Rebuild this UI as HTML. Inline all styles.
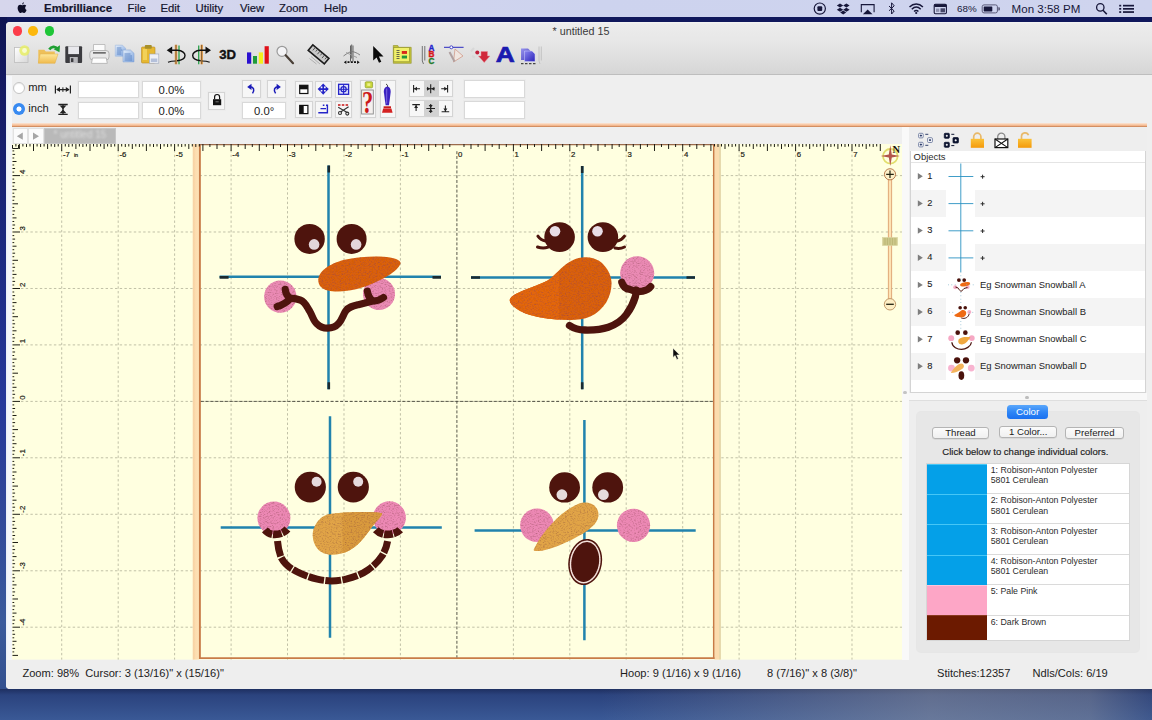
<!DOCTYPE html>
<html><head><meta charset="utf-8"><title>Embrilliance</title>
<style>
*{box-sizing:border-box;margin:0;padding:0}
html,body{width:1152px;height:720px;overflow:hidden}
body{font-family:"Liberation Sans",sans-serif;position:relative;background:#2c4480;color:#111}
.abs{position:absolute}
#desk{position:absolute;left:0;top:0;width:1152px;height:720px;background:#10185c}
#deskb{position:absolute;left:0;top:680px;width:1152px;height:40px;
 background:
 linear-gradient(to right,rgba(0,0,0,0) 0px,rgba(0,0,0,0) 600px,rgba(150,152,160,.5) 930px,rgba(140,142,152,.46) 1090px,rgba(80,90,120,.25) 1152px),
 linear-gradient(to bottom,#1a2a5a 0px,#1c2c5c 8px,#2b437e 15px,#3a5996 40px);}
#leftstrip{position:absolute;left:0;top:17px;width:7px;height:672px;background:linear-gradient(to bottom,#0e1452 0,#161c66 85px,#1c2a82 240px,#26389a 385px,#30489a 500px,#3a5a9c 605px,#33508e 672px)}
#menubar{position:absolute;left:0;top:0;width:1152px;height:17px;background:linear-gradient(to right,#d6d6ec 0,#d2d5ee 300px,#cdd3ee 600px,#cfd4ee 1152px);font-size:11.3px;color:#15152e}
#menubar span{position:absolute;top:2.250px;white-space:pre;-webkit-text-stroke:.2px #15152e}
#win{position:absolute;left:6px;top:22px;width:1150px;height:666.5px;background:#efefef;border-radius:4px 0 0 4px;overflow:hidden}
#tb{position:absolute;left:0;top:0;width:1150px;height:53px;background:linear-gradient(to bottom,#f4f4f4 0,#ececec 2px,#e7e7e7 20px,#d6d6d6 52px);border-bottom:1px solid #bebebe}
.tl{position:absolute;top:4px;width:9.5px;height:9.5px;border-radius:50%}
#title{position:absolute;top:3.200px;left:0;width:1150px;text-align:center;font-size:10.750px;color:#3a3a3a}
.fld{position:absolute;background:#fff;border:1px solid #d9d9d9;box-shadow:0 0 0 1px #ebebeb;font-size:11.3px;text-align:center;color:#222}
.lbl{position:absolute;font-size:11.6px;color:#1a1a1a;white-space:pre}
</style></head><body>
<div id="desk"></div><div id="deskb"></div><div id="leftstrip"></div>
<div id="menubar">
<svg class="abs" style="left:16.900px;top:2px" width="10.400" height="13.400" viewBox="0 0 10 12" preserveAspectRatio="none"><path d="M6.6 0.2c.1.9-.7 1.9-1.6 2 -.1-.9.7-1.9 1.6-2zM5 2.9c.5 0 1.100-.55 2.000-.5.800.05 1.500.4 1.900 1.000-1.600 1.000-1.300 3.200.300 3.800-.4 1.100-1.300 2.700-2.300 2.700-.7 0-.9-.45-1.800-.45s-1.200.45-1.800.45C2.200 9.900.6 7.300.6 5.400c0-1.800 1.200-2.900 2.400-2.900.8 0 1.500.4 2.000.4z" fill="#0e0e28"/></svg>
<span style="left:44px;font-weight:700;font-size:11.45px">Embrilliance</span>
<span style="left:127.5px">File</span>
<span style="left:160.5px">Edit</span>
<span style="left:195.5px">Utility</span>
<span style="left:240px">View</span>
<span style="left:279px">Zoom</span>
<span style="left:324px">Help</span>
</div>
<svg class="abs" style="left:800px;top:0" width="352" height="17" viewBox="800 0 352 17">
<g fill="none" stroke="#17173a" stroke-width="1.200">
<circle cx="819.800" cy="8.600" r="5.600"/>
<path d="M861.300 12.200v-7.600h12.800v7.600" stroke-width="1.100"/>
<path d="M889 6l5.200 5-2.600 3v-11.200l2.600 3-5.200 5" stroke-width="1"/>
<path d="M909.500 7c4-4 9.500-4 13.400 0M911.800 9.300c2.700-2.700 6.200-2.700 8.900 0M914.100 11.500c1.300-1.300 3-1.300 4.300 0" stroke-width="1.500"/>
<rect x="934.200" y="4.300" width="12.200" height="9.400" rx="1.200" stroke-width="1.100"/>
<rect x="982.200" y="4.900" width="15.200" height="8" rx="1.800" stroke="#5a5a78" stroke-width="1"/>
<circle cx="1100.300" cy="7.400" r="3.700" stroke-width="1.300"/><path d="M1103 10.300l3.800 4" stroke-width="1.600"/>
</g>
<g fill="#17173a">
<rect x="817.400" y="6.200" width="4.800" height="4.800" rx="1"/>
<path d="M840 3.500l3.200 2-3.200 2-3.200-2zM846.400 3.500l3.200 2-3.200 2-3.200-2zM840 7.700l3.200 2-3.200 2-3.200-2zM846.400 7.700l3.200 2-3.200 2-3.200-2zM843.200 10.600l3 2-3 2-3-2z"/>
<path d="M867.700 9.400l4.800 4.800h-9.600z"/>
<circle cx="916.200" cy="13" r="1.100"/>
<rect x="934.200" y="4.300" width="12.200" height="2.600" rx="1"/>
<rect x="940.500" y="8.300" width="4.500" height="4" opacity=".75"/><rect x="936" y="8.600" width="3.300" height="3.300" opacity=".35"/>
<rect x="983.700" y="6.400" width="8.600" height="5" rx=".6"/>
<path d="M998.300 7.300h.8a.8.800 0 0 1 .8.800v1.600a.8.800 0 0 1-.8.800h-.8z" fill="#5a5a78"/>
<rect x="1119.200" y="4.800" width="2" height="1.700"/><rect x="1123" y="4.800" width="11" height="1.700"/>
<rect x="1119.200" y="8" width="2" height="1.700"/><rect x="1123" y="8" width="11" height="1.700"/>
<rect x="1119.200" y="11.200" width="2" height="1.700"/><rect x="1123" y="11.200" width="11" height="1.700"/>
</g>
<text x="957" y="12.300" font-family="Liberation Sans" font-size="9.800" fill="#17173a">68%</text>
<text x="1011.600" y="12.600" font-family="Liberation Sans" font-size="11.550" fill="#17173a">Mon 3:58 PM</text>
</svg>
<div id="win">
<div class="abs" style="left:0;top:54px;width:6px;height:584px;background:linear-gradient(to right,#e8eef8 0,#f4f7fb 2px,#f6f7f9 6px)"></div>
<div id="tb">
 <div class="tl" style="left:6.5px;background:#fc3d4a"></div>
 <div class="tl" style="left:22.3px;background:#fcb80e"></div>
 <div class="tl" style="left:38.7px;background:#1fc638"></div>
 <div id="title">* untitled 15</div>
</div>
<svg class="abs" style="left:0;top:18px" width="560" height="34" viewBox="6 40 560 34">
<defs>
<linearGradient id="gFold" x1="0" y1="0" x2="0" y2="1"><stop offset="0" stop-color="#fde79a"/><stop offset="1" stop-color="#f0ba4c"/></linearGradient>
<linearGradient id="gDoc" x1="0" y1="0" x2="1" y2="1"><stop offset="0" stop-color="#ffffff"/><stop offset="1" stop-color="#d8d8d8"/></linearGradient>
<linearGradient id="gBlue" x1="0" y1="0" x2="1" y2="1"><stop offset="0" stop-color="#e4eefa"/><stop offset="1" stop-color="#7fa6e0"/></linearGradient>
<linearGradient id="gPur" x1="0" y1="0" x2="1" y2="1"><stop offset="0" stop-color="#8a86f0"/><stop offset="1" stop-color="#2a22b8"/></linearGradient>
</defs>
<!-- new -->
<rect x="14.500" y="47.500" width="13.500" height="15" fill="url(#gDoc)" stroke="#bdbdbd" stroke-width=".8"/>
<circle cx="24.500" cy="50.500" r="5.200" fill="#e8ee66" opacity=".85"/>
<circle cx="24.500" cy="50.500" r="2.400" fill="#f8fbd0"/>
<!-- open -->
<path d="M38.300 49.800h6l1.500 1.800h9v11.500h-16.500z" fill="#eec05a"/>
<path d="M40.200 54h17.800l-3 9.300h-16.700z" fill="url(#gFold)" stroke="#e0b048" stroke-width=".5"/>
<path d="M49.300 49.600c2.200-3.400 6-3.600 8-.8" fill="none" stroke="#1fa032" stroke-width="2.700"/>
<path d="M60 45.200l-.5 7-5.800-3z" fill="#1fa032"/>
<!-- save -->
<rect x="65.300" y="46.300" width="16.800" height="16.800" rx="1" fill="#3c3c40"/>
<rect x="68.200" y="46.300" width="10.800" height="7.800" fill="#e8e8ec"/>
<rect x="69.800" y="57" width="8" height="6.100" fill="#b8b8bc"/>
<rect x="71" y="58.200" width="2.400" height="3.800" fill="#3c3c40"/>
<!-- print -->
<path d="M93.500 52.500v-8h11.500v8" fill="#fbfbfb" stroke="#b4b4b4" stroke-width=".8"/>
<rect x="89.800" y="50.500" width="19.200" height="9.500" rx="3" fill="#e8e8e8" stroke="#a8a8a8" stroke-width=".8"/>
<rect x="93" y="52" width="12.800" height="1.700" fill="#6e6e6e"/>
<path d="M92.500 58h13.800l1 5.400h-15.800z" fill="#fdfdfd" stroke="#acacac" stroke-width=".8"/>
<!-- copy -->
<path d="M115.300 45.200h7.200l3 3v8h-10.200z" fill="url(#gBlue)" stroke="#9fb8df" stroke-width=".6"/>
<path d="M123 50h7.400l3.600 3.300v8.600h-11z" fill="url(#gBlue)" stroke="#86a4d4" stroke-width=".6"/>
<path d="M116.800 48h4.600M116.800 50h5.500M116.800 52h4.500M116.800 54h4.500M124.500 54h6M124.500 56h7.500M124.500 58h7.500M124.500 60h7.500" stroke="#4f78bc" stroke-width=".8"/>
<!-- paste -->
<rect x="141.500" y="47" width="13.500" height="16" rx="1" fill="#e6b832" stroke="#b98a22" stroke-width=".6"/><rect x="143" y="49" width="4" height="11" fill="#f6dc6a" opacity=".7"/>
<rect x="144.800" y="45" width="7" height="3.800" rx="1" fill="#a8902a"/>
<rect x="149.300" y="54" width="9.500" height="9.200" fill="#eef0f6" stroke="#9aa4ba" stroke-width=".6"/>
<rect x="150.800" y="58.500" width="6.500" height="3.500" fill="#b4c0da"/>
<!-- flip 1 -->
<g>
<path d="M176 44.800v19.400" stroke="#f4b060" stroke-width="2.600"/><path d="M176 44.800v19.400" stroke="#2a1a08" stroke-width=".6"/>
<path d="M179 45.500v18.800" stroke="#2aa04a" stroke-width="1.300"/>
<path d="M170 50.200h7.500c5 .3 7.500 3 7.500 5.300 0 2.600-3 4.700-8 5.200" fill="none" stroke="#111" stroke-width="1.400"/>
<path d="M166.700 50.200l5.500-3.800v7.600z" fill="#111"/>
<path d="M168 62.300c2.500-1 5-1.300 7.500-1.300" fill="none" stroke="#111" stroke-width="1.200"/>
</g>
<!-- flip 2 -->
<g>
<path d="M201.700 44.800v19.400" stroke="#f4b060" stroke-width="2.600"/><path d="M201.700 44.800v19.400" stroke="#2a1a08" stroke-width=".6"/>
<path d="M198.700 45.500v18.800" stroke="#2aa04a" stroke-width="1.300"/>
<path d="M207.700 50.200h-7.500c-5 .3-7.500 3-7.500 5.300 0 2.600 3 4.700 8 5.200" fill="none" stroke="#111" stroke-width="1.400"/>
<path d="M211 50.200l-5.500-3.800v7.600z" fill="#111"/>
<path d="M209.700 62.300c-2.500-1-5-1.300-7.500-1.300" fill="none" stroke="#111" stroke-width="1.200"/>
</g>
<!-- 3D -->
<text x="219.300" y="58.700" font-family="Liberation Sans" font-weight="700" font-size="13.400" fill="#111" textLength="16.800" lengthAdjust="spacingAndGlyphs" stroke="#111" stroke-width=".4">3D</text>
<!-- bars -->
<rect x="247" y="52.400" width="4.200" height="11.300" fill="#2a10d0"/>
<rect x="253" y="56" width="4" height="7.700" fill="#1e9a3a"/>
<rect x="258.800" y="52.400" width="4.200" height="11.300" fill="#f4ee1e"/>
<rect x="264.600" y="46.200" width="4.200" height="17.500" fill="#e01018"/>
<!-- magnifier -->
<circle cx="282" cy="51.300" r="5" fill="#f4f4f6" stroke="#9a9a9a" stroke-width="1.200"/>
<path d="M285.700 55.200l7.300 8" stroke="#4a4038" stroke-width="2.200" stroke-linecap="round"/>
<!-- ruler icon -->
<g transform="rotate(40 318.500 54.500)">
<rect x="308" y="50.800" width="21" height="7.200" fill="#c8c8c8" stroke="#1c1c1c" stroke-width="1.600"/>
<path d="M311.500 51v4M314.500 51v3M317.500 51v4M320.500 51v3M323.500 51v4M326.500 51v3" stroke="#444" stroke-width=".8"/>
</g>
<path d="M311 56.500l9 7.500M309.500 58.500l7 5.500" stroke="#b0b0b0" stroke-width="1"/>
<!-- needle icon -->
<g stroke="#555" fill="none" stroke-width=".9">
<path d="M350.500 45.500v16M353 45.500v16M351.700 44.500v14"/>
<path d="M343.500 56c4-3 7-4.500 8.200-4.500s5 1 8.300 3.500" stroke="#777"/>
<path d="M346 52.500l11 5" stroke="#999"/>
</g>
<path d="M343.800 62.200l2.600-1.700v3.400zM359.700 62.200l-2.600-1.700v3.400z" fill="#111"/>
<path d="M347.500 62.200h2M350.800 62.200h2M354 62.200h2" stroke="#111" stroke-width="1.800"/>
<!-- arrow cursor -->
<path d="M373.200 46v14.500l3.400-3 2.400 5.300 2.300-1-2.400-5.200h4.600z" fill="#0a0a0a"/>
<!-- yellow list -->
<path d="M393.300 45.500h4.500l.8 1.800h12.600v16h-17.900z" fill="#c4c43a" stroke="#8e8e2a" stroke-width=".6"/>
<rect x="393.800" y="47.600" width="15.800" height="14.200" fill="#f0f06a" stroke="#8a8a2a" stroke-width=".6"/>
<rect x="401.800" y="51" width="5.200" height="2.900" fill="#d8281a"/>
<rect x="401.800" y="55.600" width="5.200" height="2.900" fill="#22983a"/>
<path d="M396.500 50.500h3M396.500 52.500h3M396.500 54.500h3M396.500 56.500h3M396.500 58.500h3" stroke="#444" stroke-width=".8"/>
<!-- ABC -->
<path d="M422.300 46v15l1.200 3M424.800 46v14.500" stroke="#666" stroke-width=".9" fill="none"/>
<g font-family="Liberation Sans" font-weight="700" font-size="8.200" stroke-width=".35">
<text x="428.600" y="50.900" fill="#2222cc" stroke="#2222cc">A</text><text x="428.600" y="57.300" fill="#d41a1a" stroke="#d41a1a">B</text><text x="428.600" y="63.800" fill="#1f7a2a" stroke="#1f7a2a">C</text>
</g>
<!-- pen / node tool -->
<path d="M444 47.300h19.600" stroke="#2a2ac0" stroke-width="1"/>
<circle cx="451.300" cy="47.300" r="1.500" fill="#fff" stroke="#2a2ac0" stroke-width=".8"/>
<path d="M455 49l8 7-9.500 6z" fill="#f0e6e0" stroke="#d09a8a" stroke-width=".8"/>
<path d="M449.500 52l5 9.500" stroke="#b0a0a0" stroke-width="2"/>
<!-- red arrow -->
<circle cx="477.300" cy="52.400" r="2" fill="#c0203a"/>
<path d="M471 51.500l3-3.500M472 56l3 1.500" stroke="#d8d8d8" stroke-width="2"/>
<path d="M481 51.500h6.500v4.500h2.500l-5.800 6.500-5.700-6.500h2.500z" fill="#d0283a" stroke="#e88a96" stroke-width=".5"/>
<!-- A -->
<text x="495.800" y="61.500" font-family="Liberation Sans" font-weight="700" font-size="22" fill="#1a1ab0" stroke="#1a1ab0" stroke-width=".7" textLength="19" lengthAdjust="spacingAndGlyphs">A</text>
<!-- purple copy -->
<path d="M521 48.500h7l2.500 2.500v9h-9.500z" fill="url(#gPur)" opacity=".85"/>
<path d="M524.500 51h7.500l3 3v7.500h-10.500z" fill="url(#gPur)" stroke="#d0d0ff" stroke-width=".5"/>
<path d="M521 63.700h2.500M525 63.700h2.500M529 63.700h2.500M533 63.700h2.500" stroke="#222" stroke-width="1"/>
<path d="M539 46.500v14.500l1 3M541.300 46.500v14" stroke="#c0c0c0" stroke-width=".9" fill="none"/>
</svg>
<!-- property bar : window coords = screen - (6,22) -->
<style>
.rb{position:absolute;width:12.4px;height:12.4px;border-radius:50%}
.btn{position:absolute;background:#f6f6f6;border:1px solid #d4d4d4;box-shadow:0 0 0 1px #ececec}
</style>
<div class="rb" style="left:6.8px;top:59.6px;background:#fff;border:1px solid #c4c4c4;box-shadow:inset 0 1px 1px rgba(0,0,0,.08)"></div>
<div class="rb" style="left:6.8px;top:80.8px;background:radial-gradient(circle,#fff 0,#fff 2.1px,#3c8df2 2.9px,#2f82ee 100%)"></div>
<div class="lbl" style="left:22.3px;top:58.900px;font-size:11.200px">mm</div>
<div class="lbl" style="left:22.3px;top:80.100px;font-size:11.200px">inch</div>
<svg class="abs" style="left:0;top:53px" width="560" height="50" viewBox="6 75 560 50">
 <!-- width icon -->
 <g stroke="#222" stroke-width="1.2" fill="#222">
 <path d="M55.4 85.600v8M70.400 85.600v8M57 89.600h12" fill="none"/>
 <path d="M56.200 89.600l3.800-2.500v5zM69.600 89.600l-3.800-2.500v5z" stroke="none"/>
 <path d="M62.900 87.300v4.600" fill="none" stroke-width="1"/>
 <!-- height icon -->
 <path d="M58.300 104.500h9.400M58.300 114.300h9.400M63 105v9" fill="none" stroke-width="1.300"/>
 <path d="M63 109.200l-3.400-3.600h6.800zM63 109.600l-3.400 3.600h6.800z" stroke="none"/>
 </g>
</svg>
<div class="fld" style="left:72px;top:58.6px;width:61px;height:17.6px"></div>
<div class="fld" style="left:72px;top:79.6px;width:61px;height:17.6px"></div>
<div class="fld" style="left:135.600px;top:58.6px;width:59.800px;height:17.6px;line-height:17.8px">0.0%</div>
<div class="fld" style="left:135.600px;top:79.6px;width:59.800px;height:17.6px;line-height:17.8px">0.0%</div>
<div class="btn" style="left:202.200px;top:70.200px;width:16.800px;height:17.600px"></div>
<div class="btn" style="left:235.800px;top:58.400px;width:18.800px;height:17.600px"></div>
<div class="btn" style="left:261.200px;top:58.400px;width:19px;height:17.600px"></div>
<div class="fld" style="left:236px;top:79.6px;width:44.200px;height:17.6px;line-height:17.8px">0.0°</div>
<!-- 3x2 grid -->
<div class="btn" style="left:289.200px;top:58.600px;width:17.400px;height:17.400px"></div>
<div class="btn" style="left:308.800px;top:58.600px;width:17.400px;height:17.400px"></div>
<div class="btn" style="left:328.800px;top:58.600px;width:17.600px;height:17.400px"></div>
<div class="btn" style="left:289.200px;top:79px;width:17.400px;height:17.300px"></div>
<div class="btn" style="left:308.800px;top:79px;width:17.400px;height:17.300px"></div>
<div class="btn" style="left:328.800px;top:79px;width:17.600px;height:17.300px"></div>
<div class="btn" style="left:353.500px;top:58.400px;width:16.400px;height:37.800px"></div>
<div class="btn" style="left:373.500px;top:58.400px;width:16.400px;height:37.800px"></div>
<!-- align buttons -->
<div class="btn" style="left:402.800px;top:58.400px;width:43.800px;height:16.400px;background:linear-gradient(to right,#f7f7f7 0,#f7f7f7 14.200px,#d2d2d2 14.200px,#d2d2d2 29.300px,#f7f7f7 29.300px)"></div>
<div class="btn" style="left:402.800px;top:78.400px;width:43.800px;height:16.400px;background:linear-gradient(to right,#f7f7f7 0,#f7f7f7 14.200px,#d2d2d2 14.200px,#d2d2d2 29.300px,#f7f7f7 29.300px)"></div>
<div class="fld" style="left:457.600px;top:58.400px;width:61px;height:17.400px"></div>
<div class="fld" style="left:457.600px;top:79.400px;width:61px;height:17.400px"></div>
<svg class="abs" style="left:200px;top:53px" width="260" height="50" viewBox="206 75 260 50">
 <!-- lock -->
 <rect x="213" y="99.200" width="8.200" height="6" fill="#111"/>
 <path d="M214.600 99.200v-2.200a2.500 2.500 0 0 1 5 0v2.200" fill="none" stroke="#111" stroke-width="1.200"/>
 <rect x="215.500" y="101.300" width="3.200" height="1" fill="#777"/>
 <!-- rotate left/right -->
 <g fill="none" stroke="#1a1ab8" stroke-width="1.500">
 <path d="M250.300 86.800c3.200.3 4.700 3 2.200 6.600"/>
 <path d="M277.800 86.800c-3.200.3-4.700 3-2.200 6.600"/>
 </g>
 <path d="M247.200 87l4.300-3.200v6.200z" fill="#1a1ab8"/>
 <path d="M280.900 87l-4.300-3.200v6.200z" fill="#1a1ab8"/>
 <!-- grid icons -->
 <rect x="299.700" y="85.300" width="8.200" height="8.200" fill="#fff" stroke="#111" stroke-width="1.200"/>
 <rect x="299.700" y="85.300" width="8.200" height="4" fill="#111"/>
 <rect x="299.700" y="105.400" width="8.200" height="8.200" fill="#fff" stroke="#111" stroke-width="1.200"/>
 <rect x="299.700" y="105.400" width="4" height="8.200" fill="#111"/>
 <g fill="#2424c8">
 <path d="M323.200 83.500l2.900 3.100h-5.800zM323.200 94.700l2.900-3.100h-5.800zM317.600 89.100l3.100-2.900v5.800zM328.800 89.100l-3.100-2.900v5.800z"/>
 <path d="M322.400 86h1.600v2.300h2.300v1.600h-2.300v2.300h-1.600v-2.300h-2.300v-1.600h2.300z"/>
 </g>
 <rect x="338.600" y="84.300" width="10" height="10" fill="#dfe0fa" stroke="#2424c8" stroke-width="1.300"/>
 <circle cx="343.600" cy="89.300" r="2.600" fill="none" stroke="#2424c8" stroke-width="1.200"/>
 <path d="M343.600 84.500v9.600M338.800 89.300h9.600" stroke="#2424c8" stroke-width="1"/>
 <g stroke="#2424c8" stroke-width="1.400">
 <path d="M322.800 105.200h1.600M326 105.200h1.600M320.500 108.600h5.500M318.300 112.800h9.700M327.400 104.500v9"/>
 </g>
 <path d="M338 105h2.500M341.800 105h2.500M345.600 105h2.500" stroke="#c81414" stroke-width="1.300"/>
 <g stroke="#333" stroke-width="1.100" fill="none">
 <path d="M338.200 107.200l9.400 5.500M348.600 106.800l-8 5.200"/>
 <circle cx="340" cy="113" r="1.500"/><circle cx="347.300" cy="113.600" r="1.500"/>
 </g>
 <!-- ? icon -->
 <rect x="365.200" y="81.800" width="7.400" height="6" rx="1" fill="#c9d63a" stroke="#8a9a2a" stroke-width=".7"/>
 <rect x="367.300" y="83.300" width="3" height="2.600" fill="#eef28a"/>
 <rect x="361.600" y="90" width="11.700" height="24" fill="#f4f0ee" stroke="#8a8a8a" stroke-width=".9"/>
 <text x="361.900" y="112.600" font-family="Liberation Serif" font-weight="700" font-size="32" fill="#cc1a1a" textLength="11.200" lengthAdjust="spacingAndGlyphs">?</text>
 <!-- stamp/needle icon -->
 <path d="M386.200 84.200c1.300.5 1.500 1.600 1.300 3" stroke="#222" stroke-width="1" fill="none"/>
 <path d="M387.400 86.500c2 .4 3.400 2.200 3.300 5.200l-1.700 13.500h-3.400l-1.800-13.500c-.2-3 1.500-4.800 3.600-5.200z" fill="#3a22c0"/>
 <path d="M386.700 88.500v15" stroke="#7a66e0" stroke-width="1"/>
 <rect x="383.600" y="106.300" width="7.400" height="2" fill="#c81a1a"/>
 <path d="M383.200 108.500h8.200l1.200 4.300h-10.600z" fill="#d42222"/>
 <!-- align icons -->
 <g stroke="#222" stroke-width="1.100" fill="#222">
 <path d="M413.600 85v7.600M414 88.800h6M430.700 84.300v9M426.700 88.800h8M447.600 85v7.600M441.200 88.800h6" fill="none"/>
 <path d="M414 88.800l3-2v4zM430 88.800l-3-2v4zM431.400 88.800l3-2v4zM447.200 88.800l-3-2v4z" stroke="none"/>
 <path d="M412.300 104.600h7.600M416.100 105v6M426.400 108.500h8.600M430.700 104v9M441.600 111.800h7.600M445.400 105.400v6" fill="none"/>
 <path d="M416.100 105l-2 3h4zM430.700 108l-2-3h4zM430.700 109l-2 3h4zM445.400 111.400l-2-3h4z" stroke="none"/>
 </g>
</svg>
<!-- orange rule -->
<div class="abs" style="left:6px;top:100.800px;width:1134.600px;height:4.400px;background:linear-gradient(to bottom,#fbe6d8 0,#f8cfb0 32%,#f3b68c 64%,#cf8a5e 90%,#e6b898 100%)"></div>
<!-- tabs -->
<div class="abs" style="left:6.500px;top:106.400px;width:15.400px;height:15.600px;background:#fbfbfb;border:1px solid #e2e2e2"></div>
<div class="abs" style="left:22.300px;top:106.400px;width:15.400px;height:15.600px;background:#fbfbfb;border:1px solid #e2e2e2"></div>
<svg class="abs" style="left:6px;top:105px" width="34" height="17" viewBox="12 127 34 17"><path d="M16.800 136.200l6-3.600v7.200zM39 136.200l-6-3.600v7.200z" fill="#a6a6a6"/></svg>
<div class="abs" style="left:38px;top:106.400px;width:72px;height:15.600px;background:#b9b9b9;border:1px solid #c6c6c6"></div>
<div class="abs" style="left:38px;top:106.400px;width:72px;height:15.600px;color:#dcdcdc;font-size:10px;line-height:14.500px;text-align:center;filter:blur(.8px)">* untitled 15</div>
<svg class="abs" style="left:6px;top:122px" width="890.3" height="515.6" viewBox="12 144 890.3 515.6">
<rect x="12" y="144" width="890.3" height="515.6" fill="#ffffe0"/>
<path d="M61.7 150V659.6M118.2 150V659.6M174.6 150V659.6M231.1 150V659.6M287.5 150V659.6M344.0 150V659.6M400.4 150V659.6M513.4 150V659.6M569.8 150V659.6M626.2 150V659.6M682.7 150V659.6M739.1 150V659.6M795.6 150V659.6M852.0 150V659.6M21 175.6H902.3M21 232.0H902.3M21 288.5H902.3M21 344.9H902.3M21 457.8H902.3M21 514.3H902.3M21 570.8H902.3M21 627.2H902.3" stroke="#90907a" stroke-width="1" stroke-dasharray="2.4 2.3" fill="none" opacity=".56"/>
<path d="M21 401.4H902.3" stroke="#90907a" stroke-width="1" stroke-dasharray="2.4 2.3" fill="none" opacity=".56"/>
<defs><linearGradient id="hb" x1="0" y1="0" x2="1" y2="0"><stop offset="0" stop-color="#f6c898"/><stop offset=".3" stop-color="#fcdcae"/><stop offset="1" stop-color="#fde3b8"/></linearGradient></defs>
<rect x="193.2" y="144" width="6" height="515.6" fill="url(#hb)"/>
<rect x="192.6" y="144" width="1" height="515.6" fill="#f6cfa0" opacity=".6"/>
<rect x="714.3" y="144" width="5.2" height="515.6" fill="#fbdcae"/>
<rect x="719.4" y="144" width="1.3" height="515.6" fill="#dccb98"/>
<path d="M199.9 144V659" stroke="#c87c48" stroke-width="1.9" fill="none"/>
<path d="M713.7 144V659" stroke="#c87a46" stroke-width="1.5" fill="none"/>
<path d="M199 144.7H714.5" stroke="#9a6a4c" stroke-width="1.2" fill="none"/>
<path d="M199 658.1H714.5" stroke="#c87c48" stroke-width="1.9" fill="none"/>
<path d="M456.9 151.2V657.4M200.9 401.4H713.0" stroke="#45453a" stroke-width="1" stroke-dasharray="3 1.8" opacity=".9" fill="none"/>
<path d="M15.9 144v2.5M19.4 144v5M22.9 144v2.5M26.5 144v3M30.0 144v2.5M33.5 144v7M37.1 144v2.5M40.6 144v3M44.1 144v2.5M47.6 144v5M51.2 144v2.5M54.7 144v3M58.2 144v2.5M61.7 144v7M65.3 144v2.5M68.8 144v3M72.3 144v2.5M75.9 144v5M79.4 144v2.5M82.9 144v3M86.4 144v2.5M90.0 144v7M93.5 144v2.5M97.0 144v3M100.6 144v2.5M104.1 144v5M107.6 144v2.5M111.1 144v3M114.7 144v2.5M118.2 144v7M121.7 144v2.5M125.3 144v3M128.8 144v2.5M132.3 144v5M135.8 144v2.5M139.4 144v3M142.9 144v2.5M146.4 144v7M150.0 144v2.5M153.5 144v3M157.0 144v2.5M160.5 144v5M164.1 144v2.5M167.6 144v3M171.1 144v2.5M174.6 144v7M178.2 144v2.5M181.7 144v3M185.2 144v2.5M188.8 144v5M192.3 144v2.5M195.8 144v3M199.3 144v2.5M202.9 144v7M209.9 144v3M217.0 144v5M224.0 144v3M231.1 144v7M238.2 144v3M245.2 144v5M252.3 144v3M259.3 144v7M266.4 144v3M273.4 144v5M280.5 144v3M287.5 144v7M294.6 144v3M301.7 144v5M308.7 144v3M315.8 144v7M322.8 144v3M329.9 144v5M336.9 144v3M344.0 144v7M351.1 144v3M358.1 144v5M365.2 144v3M372.2 144v7M379.3 144v3M386.3 144v5M393.4 144v3M400.4 144v7M407.5 144v3M414.6 144v5M421.6 144v3M428.7 144v7M435.7 144v3M442.8 144v5M449.8 144v3M464.0 144v3M471.0 144v5M478.1 144v3M485.1 144v7M492.2 144v3M499.2 144v5M506.3 144v3M513.4 144v7M520.4 144v3M527.5 144v5M534.5 144v3M541.6 144v7M548.6 144v3M555.7 144v5M562.7 144v3M569.8 144v7M576.9 144v3M583.9 144v5M591.0 144v3M598.0 144v7M605.1 144v3M612.1 144v5M619.2 144v3M626.2 144v7M633.3 144v3M640.4 144v5M647.4 144v3M654.5 144v7M661.5 144v3M668.6 144v5M675.6 144v3M682.7 144v7M689.8 144v3M696.8 144v5M703.9 144v3M710.9 144v7M714.5 144v2.5M718.0 144v3M721.5 144v2.5M725.0 144v5M728.6 144v2.5M732.1 144v3M735.6 144v2.5M739.1 144v7M742.7 144v2.5M746.2 144v3M749.7 144v2.5M753.3 144v5M756.8 144v2.5M760.3 144v3M763.8 144v2.5M767.4 144v7M770.9 144v2.5M774.4 144v3M778.0 144v2.5M781.5 144v5M785.0 144v2.5M788.5 144v3M792.1 144v2.5M795.6 144v7M799.1 144v2.5M802.7 144v3M806.2 144v2.5M809.7 144v5M813.2 144v2.5M816.8 144v3M820.3 144v2.5M823.8 144v7M827.4 144v2.5M830.9 144v3M834.4 144v2.5M837.9 144v5M841.5 144v2.5M845.0 144v3M848.5 144v2.5M852.0 144v7M855.6 144v2.5M859.1 144v3M862.6 144v2.5M866.2 144v5M869.7 144v2.5M873.2 144v3M876.7 144v2.5M880.3 144v7M12.5 150.9h1.7M12.5 154.4h2.6M12.5 158.0h1.7M12.5 161.5h4M12.5 165.0h1.7M12.5 168.5h2.6M12.5 172.1h1.7M12.5 175.6h7.5M12.5 179.1h1.7M12.5 182.7h2.6M12.5 186.2h1.7M12.5 189.7h4M12.5 193.2h1.7M12.5 196.8h2.6M12.5 200.3h1.7M12.5 203.8h5.5M12.5 207.4h1.7M12.5 210.9h2.6M12.5 214.4h1.7M12.5 217.9h4M12.5 221.5h1.7M12.5 225.0h2.6M12.5 228.5h1.7M12.5 232.0h7.5M12.5 235.6h1.7M12.5 239.1h2.6M12.5 242.6h1.7M12.5 246.2h4M12.5 249.7h1.7M12.5 253.2h2.6M12.5 256.7h1.7M12.5 260.3h5.5M12.5 263.8h1.7M12.5 267.3h2.6M12.5 270.9h1.7M12.5 274.4h4M12.5 277.9h1.7M12.5 281.4h2.6M12.5 285.0h1.7M12.5 288.5h7.5M12.5 292.0h1.7M12.5 295.6h2.6M12.5 299.1h1.7M12.5 302.6h4M12.5 306.1h1.7M12.5 309.7h2.6M12.5 313.2h1.7M12.5 316.7h5.5M12.5 320.3h1.7M12.5 323.8h2.6M12.5 327.3h1.7M12.5 330.8h4M12.5 334.4h1.7M12.5 337.9h2.6M12.5 341.4h1.7M12.5 344.9h7.5M12.5 348.5h1.7M12.5 352.0h2.6M12.5 355.5h1.7M12.5 359.1h4M12.5 362.6h1.7M12.5 366.1h2.6M12.5 369.6h1.7M12.5 373.2h5.5M12.5 376.7h1.7M12.5 380.2h2.6M12.5 383.8h1.7M12.5 387.3h4M12.5 390.8h1.7M12.5 394.3h2.6M12.5 397.9h1.7M12.5 401.4h7.5M12.5 404.9h1.7M12.5 408.5h2.6M12.5 412.0h1.7M12.5 415.5h4M12.5 419.0h1.7M12.5 422.6h2.6M12.5 426.1h1.7M12.5 429.6h5.5M12.5 433.2h1.7M12.5 436.7h2.6M12.5 440.2h1.7M12.5 443.7h4M12.5 447.3h1.7M12.5 450.8h2.6M12.5 454.3h1.7M12.5 457.8h7.5M12.5 461.4h1.7M12.5 464.9h2.6M12.5 468.4h1.7M12.5 472.0h4M12.5 475.5h1.7M12.5 479.0h2.6M12.5 482.5h1.7M12.5 486.1h5.5M12.5 489.6h1.7M12.5 493.1h2.6M12.5 496.7h1.7M12.5 500.2h4M12.5 503.7h1.7M12.5 507.2h2.6M12.5 510.8h1.7M12.5 514.3h7.5M12.5 517.8h1.7M12.5 521.4h2.6M12.5 524.9h1.7M12.5 528.4h4M12.5 531.9h1.7M12.5 535.5h2.6M12.5 539.0h1.7M12.5 542.5h5.5M12.5 546.1h1.7M12.5 549.6h2.6M12.5 553.1h1.7M12.5 556.6h4M12.5 560.2h1.7M12.5 563.7h2.6M12.5 567.2h1.7M12.5 570.8h7.5M12.5 574.3h1.7M12.5 577.8h2.6M12.5 581.3h1.7M12.5 584.9h4M12.5 588.4h1.7M12.5 591.9h2.6M12.5 595.4h1.7M12.5 599.0h5.5M12.5 602.5h1.7M12.5 606.0h2.6M12.5 609.6h1.7M12.5 613.1h4M12.5 616.6h1.7M12.5 620.1h2.6M12.5 623.7h1.7M12.5 627.2h7.5M12.5 630.7h1.7M12.5 634.3h2.6M12.5 637.8h1.7M12.5 641.3h4M12.5 644.8h1.7M12.5 648.4h2.6M12.5 651.9h1.7M12.5 655.4h5.5" stroke="#1c1c14" stroke-width="1" fill="none"/>
<path d="M12.5 145v3.5h6v-3.5" stroke="#1c1c14" stroke-width="1" fill="none"/>
<g font-family="Liberation Sans" font-size="7.8" fill="#1c1c14" stroke="#1c1c14" stroke-width=".2"><text x="62.9" y="156.6">-7</text><text x="119.4" y="156.6">-6</text><text x="175.8" y="156.6">-5</text><text x="232.3" y="156.6">-4</text><text x="288.7" y="156.6">-3</text><text x="345.2" y="156.6">-2</text><text x="401.6" y="156.6">-1</text><text x="458.1" y="156.6">0</text><text x="514.6" y="156.6">1</text><text x="571.0" y="156.6">2</text><text x="627.5" y="156.6">3</text><text x="683.9" y="156.6">4</text><text x="740.4" y="156.6">5</text><text x="796.8" y="156.6">6</text><text x="853.2" y="156.6">7</text><text x="73.9" y="156.600" font-size="5.5">in</text><text transform="translate(25.3 174.0) rotate(-90)">4</text><text transform="translate(25.3 230.4) rotate(-90)">3</text><text transform="translate(25.3 286.9) rotate(-90)">2</text><text transform="translate(25.3 343.3) rotate(-90)">1</text><text transform="translate(25.3 399.8) rotate(-90)">0</text><text transform="translate(25.3 456.2) rotate(-90)">-1</text><text transform="translate(25.3 512.7) rotate(-90)">-2</text><text transform="translate(25.3 569.1) rotate(-90)">-3</text><text transform="translate(25.3 625.6) rotate(-90)">-4</text></g>
<defs><filter id="st" x="0" y="0" width="100%" height="100%"><feTurbulence type="fractalNoise" baseFrequency=".55 .9" numOctaves="2" seed="3" result="n"/><feColorMatrix in="n" type="matrix" values="0 0 0 0 .25  0 0 0 0 .05  0 0 0 0 .05  0 0 0 1.400 -.66" result="a"/><feComposite in="a" in2="SourceGraphic" operator="in" result="t"/><feMerge><feMergeNode in="SourceGraphic"/><feMergeNode in="t"/></feMerge></filter></defs>
<g id="faces" stroke-linecap="round" stroke-linejoin="round">
<!-- crosshairs -->
<g stroke="#2183ad" stroke-width="2.500" stroke-linecap="butt" fill="none">
<path d="M219.6 276.700H441M328.500 165.500V389.300"/>
<path d="M471 277.4H695M582.2 166V389.3"/>
<path d="M220.7 527.4H441.8M330 416.3V637.7"/>
<path d="M474.6 530.6H695.7M584.4 419.9V640.2"/>
</g>
<g stroke="#1a2a30" stroke-width="2.6" stroke-linecap="butt" fill="none">
<path d="M219.6 277.4h9M432.5 277.4h8.5M328.8 165.5v7M328.8 382.3v7"/>
<path d="M471 277.5h9M686.5 277.5h8.5M582.2 166v7M582.2 382.3v7"/>
</g>
<!-- Face A -->
<g>
<circle cx="280.3" cy="296.6" r="16.2" fill="#ea8ab4" filter="url(#st)"/>
<circle cx="379" cy="294" r="16" fill="#ea8ab4" filter="url(#st)"/>
<ellipse cx="309.6" cy="238.9" rx="15.2" ry="15" fill="#4e140d"/>
<ellipse cx="351.6" cy="238.9" rx="15" ry="15" fill="#4e140d"/>
<circle cx="314.1" cy="244.4" r="5.3" fill="#e3d6da"/>
<circle cx="356.1" cy="244.4" r="5.3" fill="#e3d6da"/>
<path d="M318.3 279.5C319 270 332 262.500 346 259.500C360 256.500 378 255.500 390 257.500C397 258.600 401.500 261 400.300 264C398.500 268.500 392 273.500 386 277C378 281.500 368 286 357 289C347 291.600 335 292.200 328 290.500C321.500 289 318 285 318.300 279.500Z" fill="#d9600f" filter="url(#st)"/>
<path d="M285.2 289.400Q286 296 290.600 298.400M277.200 306.600Q285 304.500 290.600 298.400Q295 298 300.500 300.200C305 302 306.500 306 309.600 311C312.500 316 313.500 321 316.800 323.700C320 327 324 328.200 327.600 328.200C331.500 328.200 335.500 327 338.400 323.700C342 320 343 315 345.700 311C348.500 307 353 306 358.300 304.700L372.700 301.100M367.300 291.200Q368.500 298 372.700 301.100Q379 301 383.500 297.500" stroke="#4e140d" stroke-width="7.200" fill="none"/>
</g>
<!-- Face B -->
<g>
<path d="M537.9 236.200Q541 240.500 545.500 241M537.500 247Q543 249 548.200 247.200M624.500 236.200Q621.500 240.500 617.500 241M624.500 247Q620 249.200 615 248" stroke="#4e140d" stroke-width="3" fill="none"/>
<ellipse cx="559.6" cy="237.1" rx="15.3" ry="14.9" fill="#4e140d"/>
<ellipse cx="602.9" cy="237.1" rx="15.3" ry="14.9" fill="#4e140d"/>
<circle cx="555" cy="231.300" r="5.300" fill="#e8dde6"/>
<circle cx="597.500" cy="231.300" r="5.300" fill="#e8dde6"/>
<circle cx="637.2" cy="273.2" r="17" fill="#ea8ab4" filter="url(#st)"/>
<path d="M509.9 299.300C512 294 525 290 535 286C542 283 547 281.500 550.500 278.600C558 272 563 265 572.200 260.500C577 258 582 257 586.600 257.300C594 257.700 600.500 260.500 604.700 265.900C608.500 270.500 611.300 276 611.500 282.200C611.700 289.500 610 296 606.500 302C602.500 308.500 597 313.500 590.200 316.500C583.500 319.500 576 320.200 568.600 320C557 319.700 546 318.800 536 316.500C528 314.700 521 312 516.200 308.400C512 305.300 509 302.500 509.900 299.300Z" fill="#d9600f" filter="url(#st)"/>
<path d="M509.9 299.300C512 294 525 290 535 286C542 283 547 281.500 550.500 278.600C553.500 276 556.500 273.500 559 271.200V319.600C553 319.400 544 318.400 536 316.500C528 314.700 521 312 516.200 308.400C512 305.300 509 302.500 509.900 299.300Z" fill="#e2660f" filter="url(#st)"/>
<path d="M569.5 325.500C574 328.500 579 330 584.800 330C593 330.200 601 329.800 608.300 327.300C616 324.600 622 320.500 626.300 314.700C630.500 309 633.500 303 635.400 296.600L636.300 290M621.800 282.200C623 286.500 626 289 630 289.400C634.500 291.800 639 291.800 642.600 291.200C646 290.500 649 289 650.700 286.700" stroke="#4e140d" stroke-width="7.300" fill="none"/>
</g>
<!-- Face C -->
<g>
<circle cx="273.900" cy="518.100" r="16.500" fill="#ec88b4" filter="url(#st)"/>
<circle cx="389.400" cy="517.800" r="16.500" fill="#ec88b4" filter="url(#st)"/>
<ellipse cx="310.300" cy="487.100" rx="15.600" ry="15.300" fill="#4e140d"/>
<ellipse cx="353.300" cy="487.100" rx="15.600" ry="15.300" fill="#4e140d"/>
<circle cx="316.600" cy="481.700" r="5" fill="#e6dadd"/>
<circle cx="358.200" cy="481.700" r="5" fill="#e6dadd"/>
<path d="M382.200 513.200C372 511.800 362 512 353.300 512.300C345 512.600 337 512.800 329.800 514.100C323 515.400 318.500 519.500 315.400 525C313.500 528.500 312.500 532 312.700 535.800C313 540.500 314.300 545 317.200 548.400C320.800 552.600 326 554.600 331.600 554.700C338 554.800 344 553.200 349.700 550.200C355.500 547 360.300 542.500 364.100 537.600C368 532.500 371.500 527.500 374.900 523.200C378 519.300 381.500 516.500 382.200 513.200Z" fill="#e1a446" filter="url(#st)"/>
<path d="M382.200 513.200C372 511.800 362 512 353.300 512.300C349 512.500 345.500 512.600 342.500 512.700V553.300C345 552.500 347.500 551.400 349.700 550.200C355.500 547 360.300 542.500 364.100 537.600C368 532.500 371.500 527.500 374.900 523.200C378 519.300 381.500 516.500 382.200 513.200Z" fill="#d99a3e" filter="url(#st)"/>
<path d="M277.500 541C278 547 279 552 281.100 557.500C284.500 564 290 568.500 297.300 571.900C303.500 575 310 577.500 317.200 579.100C322 580.200 327 580.900 331.600 580.900C336.500 580.900 341.500 580.200 346.100 579.100C354 577.200 361.500 574.500 367.700 570.100C374 565.700 378.800 561 382.200 555.700C385 551 386.800 546 387.600 541.200" stroke="#4e140d" stroke-width="7" stroke-linecap="butt" stroke-dasharray="15.800 1.300" fill="none"/>
<path d="M264.900 529.800C267.500 533 271 534.600 274.800 534.400C280 534.400 284.500 532.600 287.400 529M375.800 529.800C378.500 532.800 383 534.600 387.600 534.400C392.500 534.300 397.500 532.800 400.200 529.800" stroke="#4e140d" stroke-width="7.600" stroke-linecap="butt" stroke-dasharray="8.600 .900" fill="none"/>
</g>
<!-- Face D -->
<g>
<circle cx="537" cy="525.300" r="16.800" fill="#ec88b4" filter="url(#st)"/>
<circle cx="633.500" cy="525.300" r="16.600" fill="#ec88b4" filter="url(#st)"/>
<ellipse cx="564.600" cy="487.400" rx="15.400" ry="15.200" fill="#4e140d"/>
<ellipse cx="607.700" cy="487.400" rx="15.400" ry="15.200" fill="#4e140d"/>
<circle cx="561.900" cy="494.700" r="5.400" fill="#e6dcdc"/>
<circle cx="603.400" cy="494.700" r="5.400" fill="#e6dcdc"/>
<path d="M533.900 549.300C538 540 545 531 552.300 523.200C558.500 516.500 565 511 572.200 506.900C576.500 504.400 581 502.400 584.800 502.400C589.500 502.400 593.500 504 595.700 506.900C597.800 509.500 598.800 512.500 598.400 515.900C598 520 595.500 523.500 592 526.800C586.500 532 579.500 535.800 572.200 539.400C565 543 557.500 546.200 550.500 548.400C545 550.200 540 551.300 536.100 551.100C534.200 551 533.300 550.500 533.900 549.300Z" fill="#e1a446" filter="url(#st)"/>
<g transform="rotate(9 585.2 562)">
<ellipse cx="585.200" cy="562" rx="16.800" ry="23.200" fill="#4e140d"/>
<ellipse cx="585.200" cy="562" rx="14.500" ry="20.800" fill="none" stroke="#f6e2dc" stroke-width="1.500" stroke-dasharray="1.600 .700"/>
</g>
</g>
</g>

<!-- zoom slider + compass + cursor -->
<g>
<rect x="888.3" y="179" width="3.4" height="120" fill="#fde3b4" stroke="#d89866" stroke-width=".8"/>
<circle cx="890" cy="174.300" r="5.600" fill="#fdf0c8" stroke="#b8794c" stroke-width="1"/>
<path d="M886.200 174.300h7.600M890 170.500v7.600" stroke="#221" stroke-width="1.200"/>
<circle cx="890" cy="304.300" r="5.700" fill="#fdeec4" stroke="#c39a6a" stroke-width="1"/>
<path d="M886.200 304.300h7.600" stroke="#221" stroke-width="1.300"/>
<rect x="882.500" y="237.500" width="15" height="8" fill="#cdc88a" stroke="#d8d2a0" stroke-width=".6"/>
<path d="M885 238v7M887.500 238v7M890 238v7M892.500 238v7M895 238v7" stroke="#b9b474" stroke-width=".8"/>
<circle cx="890.300" cy="156.300" r="7.300" fill="none" stroke="#e2de6c" stroke-width="1.800"/>
<path d="M890.300 145.300l1.500 9.300 8 1.400-8 1.400-1.500 8.600-1.500-8.600-8.200-1.400 8.200-1.400z" fill="#b3564c"/>
<text x="892.600" y="153.200" font-family="Liberation Serif" font-weight="700" font-size="10.500" fill="#1a1208">N</text>
</g>
<path d="M673 348.200v9.200l2.100-1.900 1.700 3.900 1.600-.7-1.700-3.800h3z" fill="#0c0c0c" stroke="#fffef0" stroke-width=".5"/>

</svg>
<div class="abs" style="left:896.3px;top:105.4px;width:6.7px;height:532.6px;background:#f9f9f9"></div>
<div class="abs" style="left:903px;top:105.4px;width:237.5999999999999px;height:532.6px;background:#eeeeee"></div>
<svg class="abs" style="left:904px;top:107px" width="130" height="22" viewBox="910 129 130 22">
<defs><linearGradient id="gLock" x1="0" y1="0" x2="0" y2="1"><stop offset="0" stop-color="#fbc23a"/><stop offset="1" stop-color="#f49a0a"/></linearGradient></defs>
<g fill="#f8f8fa" stroke="#5f6f96" stroke-width=".8">
<rect x="918.600" y="133.300" width="4.600" height="4.600" rx="1"/><rect x="918.600" y="142.300" width="4.600" height="4.600" rx="1"/><rect x="927.600" y="137.700" width="4.800" height="4.800" rx="1"/>
</g>
<path d="M919.800 135.600h2.200M920.900 134.500v2.200M919.800 144.600h2.200M920.900 143.500v2.200M929 140.100h2M930 139.100v2M925.300 134.300h3M925.300 145.300h3" stroke="#1c2c5c" stroke-width=".9"/>
<g fill="#0c1430" stroke="#0c1430" stroke-width=".8">
<rect x="944.300" y="133.300" width="5" height="5" rx=".8"/><rect x="944.300" y="142.300" width="5" height="5" rx=".8"/><rect x="953" y="137.600" width="5.400" height="5.400" rx=".8"/>
</g>
<path d="M945.800 135.800h2M946.800 134.800v2M945.800 144.800h2M946.800 143.800v2M954.700 140.300h2M955.700 139.300v2" stroke="#fff" stroke-width="1"/>
<path d="M951.300 134.300h3M951.300 145.600h3" stroke="#0c1430" stroke-width="1"/>
<!-- lock closed -->
<path d="M973.700 139.500v-2.700a3.600 3.600 0 0 1 7.200 0v2.700" fill="none" stroke="#e8b96a" stroke-width="1.700"/>
<rect x="970.800" y="138.800" width="13.200" height="9" fill="url(#gLock)"/>
<!-- lock X -->
<path d="M997.700 139.500v-2.700a3.600 3.600 0 0 1 7.200 0v2.700" fill="none" stroke="#8a8a8a" stroke-width="1.300"/>
<rect x="995" y="139" width="12.800" height="8.600" fill="#fff" stroke="#111" stroke-width="1.200"/>
<path d="M995 139l12.800 8.600M1007.800 139l-12.800 8.600" stroke="#111" stroke-width="1.100"/>
<!-- lock open -->
<path d="M1021.500 139.500v-3.200a3.600 3.600 0 0 1 7-1" fill="none" stroke="#e8b96a" stroke-width="1.700"/>
<rect x="1018" y="138.800" width="13.600" height="9" fill="url(#gLock)"/>
</svg>
<div class="abs" style="left:903.8px;top:129.4px;width:236.0px;height:241.20000000000002px;background:#fff;border:1px solid #d4d4d4;border-top:none"></div>
<div class="abs" style="left:907.6px;top:128.6px;font-size:9.45px;color:#2a2a2a">Objects</div>
<div class="abs" style="left:905px;top:140px;width:233.79999999999995px;height:1px;background:#e4e4e4"></div>
<div class="abs" style="left:921.3px;top:148.7px;font-size:9.3px;color:#1e1e1e;-webkit-text-stroke:.1px #1e1e1e">1</div>
<div class="abs" style="left:905px;top:167.8px;width:35px;height:27.15px;background:#f4f4f4"></div>
<div class="abs" style="left:969px;top:167.8px;width:169.79999999999995px;height:27.15px;background:#f4f4f4"></div>
<div class="abs" style="left:921.3px;top:175.8px;font-size:9.3px;color:#1e1e1e;-webkit-text-stroke:.1px #1e1e1e">2</div>
<div class="abs" style="left:921.3px;top:203.0px;font-size:9.3px;color:#1e1e1e;-webkit-text-stroke:.1px #1e1e1e">3</div>
<div class="abs" style="left:905px;top:222.1px;width:35px;height:27.15px;background:#f4f4f4"></div>
<div class="abs" style="left:969px;top:222.1px;width:169.79999999999995px;height:27.15px;background:#f4f4f4"></div>
<div class="abs" style="left:921.3px;top:230.1px;font-size:9.3px;color:#1e1e1e;-webkit-text-stroke:.1px #1e1e1e">4</div>
<div class="abs" style="left:921.3px;top:257.3px;font-size:9.3px;color:#1e1e1e;-webkit-text-stroke:.1px #1e1e1e">5</div>
<div class="abs" style="left:974px;top:257.0px;font-size:9.45px;color:#222;white-space:pre">Eg Snowman Snowball A</div>
<div class="abs" style="left:905px;top:276.4px;width:35px;height:27.15px;background:#f4f4f4"></div>
<div class="abs" style="left:969px;top:276.4px;width:169.79999999999995px;height:27.15px;background:#f4f4f4"></div>
<div class="abs" style="left:921.3px;top:284.4px;font-size:9.3px;color:#1e1e1e;-webkit-text-stroke:.1px #1e1e1e">6</div>
<div class="abs" style="left:974px;top:284.1px;font-size:9.45px;color:#222;white-space:pre">Eg Snowman Snowball B</div>
<div class="abs" style="left:921.3px;top:311.6px;font-size:9.3px;color:#1e1e1e;-webkit-text-stroke:.1px #1e1e1e">7</div>
<div class="abs" style="left:974px;top:311.3px;font-size:9.45px;color:#222;white-space:pre">Eg Snowman Snowball C</div>
<div class="abs" style="left:905px;top:330.8px;width:35px;height:27.15px;background:#f4f4f4"></div>
<div class="abs" style="left:969px;top:330.8px;width:169.79999999999995px;height:27.15px;background:#f4f4f4"></div>
<div class="abs" style="left:921.3px;top:338.7px;font-size:9.3px;color:#1e1e1e;-webkit-text-stroke:.1px #1e1e1e">8</div>
<div class="abs" style="left:974px;top:338.4px;font-size:9.45px;color:#222;white-space:pre">Eg Snowman Snowball D</div>
<svg class="abs" style="left:904px;top:138px" width="80" height="220" viewBox="910 160 80 220"><path d="M917.800 173.1v6.400l5-3.200z" fill="#7e7e7e"/><path d="M948.500 176.5h24.800" stroke="#2a92c2" stroke-width=".9"/><path d="M980.600 176.7h4M982.600 174.7v4" stroke="#2c2c2c" stroke-width="1"/><path d="M917.800 200.2v6.400l5-3.200z" fill="#7e7e7e"/><path d="M948.500 203.6h24.800" stroke="#2a92c2" stroke-width=".9"/><path d="M980.600 203.8h4M982.600 201.8v4" stroke="#2c2c2c" stroke-width="1"/><path d="M917.800 227.4v6.400l5-3.200z" fill="#7e7e7e"/><path d="M948.500 230.8h24.800" stroke="#2a92c2" stroke-width=".9"/><path d="M980.600 231.0h4M982.600 229.0v4" stroke="#2c2c2c" stroke-width="1"/><path d="M917.800 254.5v6.400l5-3.200z" fill="#7e7e7e"/><path d="M948.500 257.9h24.800" stroke="#2a92c2" stroke-width=".9"/><path d="M980.600 258.1h4M982.600 256.1v4" stroke="#2c2c2c" stroke-width="1"/><path d="M917.800 281.7v6.400l5-3.200z" fill="#7e7e7e"/><path d="M917.800 308.8v6.400l5-3.200z" fill="#7e7e7e"/><path d="M917.800 336.0v6.400l5-3.200z" fill="#7e7e7e"/><path d="M917.800 363.1v6.400l5-3.200z" fill="#7e7e7e"/><path d="M960.800 163.500V272" stroke="#2a92c2" stroke-width=".9"/><g transform="translate(961.3 284.8) scale(0.125) translate(-328.6 -277.2)"><circle cx="280.3" cy="296.6" r="16.2" fill="#f4b0c8"/><circle cx="379" cy="294" r="16" fill="#f4b0c8"/>
<ellipse cx="309.6" cy="238.9" rx="15.2" ry="15" fill="#4a120c"/><ellipse cx="351.6" cy="238.9" rx="15" ry="15" fill="#4a120c"/>
<ellipse cx="359" cy="273" rx="41" ry="16" transform="rotate(-12 359 273)" fill="#ee6a14"/>
<path d="M282 295Q295 298 305 305C313 318 318 328 328 328C338 328 342 312 350 307L378 299" stroke="#4a120c" stroke-width="8" fill="none"/></g><g transform="translate(962.8 312.4) scale(0.118) translate(-582.2 -277.4)"><ellipse cx="559.6" cy="237.1" rx="15.3" ry="14.9" fill="#4a120c"/><ellipse cx="602.9" cy="237.1" rx="15.3" ry="14.9" fill="#4a120c"/>
<circle cx="637.2" cy="273.2" r="17" fill="#f4b0c8"/>
<path d="M509.900 299.300C530 288 550 280 572 260C590 250 612 265 611.500 282C611 305 595 320 568 320C540 319 510 312 509.900 299.300Z" fill="#ee6a14"/>
<path d="M569.500 325.500C600 335 630 320 636 290" stroke="#4a120c" stroke-width="8" fill="none"/></g><g transform="translate(961.2 339.8) scale(0.178) translate(-330 -527.4)"><circle cx="273.900" cy="518.100" r="16.500" fill="#f6a8c4"/><circle cx="389.400" cy="517.800" r="16.500" fill="#f6a8c4"/>
<ellipse cx="310.300" cy="487.100" rx="13" ry="14" fill="#4a120c"/><ellipse cx="353.300" cy="487.100" rx="13" ry="14" fill="#4a120c"/>
<path d="M382 513C350 511 330 512 316 525C308 545 320 556 335 554C360 550 372 525 382 513Z" fill="#f0a840"/>
<path d="M277.500 541C280 570 310 581 331.600 581C355 581 385 565 387.600 541" stroke="#4a120c" stroke-width="7" fill="none"/></g><g transform="translate(961.2 367) scale(0.205) translate(-584.4 -520)"><circle cx="537" cy="525.300" r="16.800" fill="#f8b4d0"/><circle cx="633.500" cy="525.300" r="16.600" fill="#f8b4d0"/>
<ellipse cx="564.600" cy="487.400" rx="15.400" ry="15.200" fill="#4a120c"/><ellipse cx="607.700" cy="487.400" rx="15.400" ry="15.200" fill="#4a120c"/>
<path d="M533.900 549.300C545 525 570 503 584.800 502.400C598 503 602 518 592 527C570 543 545 551 533.900 549.300Z" fill="#f4b45c"/>
<ellipse cx="585.200" cy="562" rx="14" ry="21" fill="#4a120c"/></g><path d="M960.800 272v8M960.800 292v12M960.800 321v8M948 284.800h8M966 284.800h8M949 312.400h6M969 312.400h5" stroke="#7ab0c8" stroke-width=".8" stroke-dasharray=".8 2.600"/></svg>
<div class="abs" style="left:903px;top:371px;width:237.5999999999999px;height:8px;background:#f8f8f8;border-bottom:1px solid #dedede"></div>
<div class="abs" style="left:1019.4000000000001px;top:373.6px;width:3.600px;height:3.600px;border-radius:50%;background:#bdbdbd"></div>
<div class="abs" style="left:897.4px;top:369px;width:3.400px;height:3.400px;border-radius:50%;background:#c4c4c4"></div>
<div class="abs" style="left:911px;top:389.5px;width:221.5999999999999px;height:240.0px;background:#e7e7e7;border-radius:4px;box-shadow:0 0 0 1px #e6e6e6"></div>
<div class="abs" style="left:1001px;top:383px;width:41.200px;height:14px;border-radius:3.500px;background:linear-gradient(to bottom,#5aa7fb 0,#2f86f6 50%,#1a70f0 100%);color:#fff;font-size:9.700px;line-height:13.600px;text-align:center">Color</div>
<div class="abs" style="left:925.5px;top:405.4px;width:57.8px;height:12px;border-radius:3px;background:linear-gradient(to bottom,#fbfbfb,#f0f0f0);border:1px solid #b4b4b4;box-shadow:0 .5px .5px rgba(0,0,0,.12);font-size:9.600px;line-height:10.6px;text-align:center;color:#222">Thread</div>
<div class="abs" style="left:993.3px;top:404.2px;width:57.8px;height:12.2px;border-radius:3px;background:linear-gradient(to bottom,#fbfbfb,#f0f0f0);border:1px solid #b4b4b4;box-shadow:0 .5px .5px rgba(0,0,0,.12);font-size:9.600px;line-height:10.799999999999999px;text-align:center;color:#222">1 Color...</div>
<div class="abs" style="left:1059.3px;top:405.4px;width:58.5px;height:12px;border-radius:3px;background:linear-gradient(to bottom,#fbfbfb,#f0f0f0);border:1px solid #b4b4b4;box-shadow:0 .5px .5px rgba(0,0,0,.12);font-size:9.600px;line-height:10.6px;text-align:center;color:#222">Preferred</div>
<div class="abs" style="left:936.3px;top:423.7px;font-size:9.560px;color:#1c1c1c;white-space:pre;-webkit-text-stroke:.15px #1c1c1c">Click below to change individual colors.</div>
<div class="abs" style="left:921.1px;top:441.6px;width:201.4999999999999px;height:176.19999999999993px;background:#fff;box-shadow:0 0 0 1px #d6d6d6;overflow:hidden">
<div class="abs" style="left:0;top:0.00px;width:59.800px;height:30.55px;background:#04a0e8;border-top:1px solid #46c6f6"></div>
<div class="abs" style="left:59.800px;top:29.55px;width:150px;height:1px;background:#dadada"></div>
<div class="abs" style="left:63.600px;top:1.30px;font-size:8.780px;line-height:10.400px;color:#2c2c2c;white-space:pre">1: Robison-Anton Polyester<br>5801 Cerulean</div>
<div class="abs" style="left:0;top:30.35px;width:59.800px;height:30.55px;background:#04a0e8;border-top:1px solid #46c6f6"></div>
<div class="abs" style="left:59.800px;top:59.90px;width:150px;height:1px;background:#dadada"></div>
<div class="abs" style="left:63.600px;top:31.65px;font-size:8.780px;line-height:10.400px;color:#2c2c2c;white-space:pre">2: Robison-Anton Polyester<br>5801 Cerulean</div>
<div class="abs" style="left:0;top:60.70px;width:59.800px;height:30.55px;background:#04a0e8;border-top:1px solid #46c6f6"></div>
<div class="abs" style="left:59.800px;top:90.25px;width:150px;height:1px;background:#dadada"></div>
<div class="abs" style="left:63.600px;top:62.00px;font-size:8.780px;line-height:10.400px;color:#2c2c2c;white-space:pre">3: Robison-Anton Polyester<br>5801 Cerulean</div>
<div class="abs" style="left:0;top:91.05px;width:59.800px;height:30.55px;background:#04a0e8;border-top:1px solid #46c6f6"></div>
<div class="abs" style="left:59.800px;top:120.60px;width:150px;height:1px;background:#dadada"></div>
<div class="abs" style="left:63.600px;top:92.35px;font-size:8.780px;line-height:10.400px;color:#2c2c2c;white-space:pre">4: Robison-Anton Polyester<br>5801 Cerulean</div>
<div class="abs" style="left:0;top:121.40px;width:59.800px;height:30.55px;background:#fda6c6;border-top:1px solid #ffc4da"></div>
<div class="abs" style="left:59.800px;top:150.95px;width:150px;height:1px;background:#dadada"></div>
<div class="abs" style="left:63.600px;top:122.70px;font-size:8.780px;line-height:10.400px;color:#2c2c2c;white-space:pre">5: Pale Pink<br></div>
<div class="abs" style="left:0;top:151.75px;width:59.800px;height:30.55px;background:#6c1a00;border-top:1px solid #8a3a20"></div>
<div class="abs" style="left:59.800px;top:181.30px;width:150px;height:1px;background:#dadada"></div>
<div class="abs" style="left:63.600px;top:153.05px;font-size:8.780px;line-height:10.400px;color:#2c2c2c;white-space:pre">6: Dark Brown<br></div>
</div>
<div class="abs" style="left:0;top:637.600px;width:1150px;height:30px;background:#eeeeee;font-size:11.100px;color:#1c1c1c">
<span class="abs" style="left:16.400px;top:7.600px;white-space:pre">Zoom: 98%  Cursor: 3 (13/16)" x (15/16)"</span>
<span class="abs" style="left:614px;top:7.600px;white-space:pre">Hoop: 9 (1/16) x 9 (1/16)</span>
<span class="abs" style="left:761px;top:7.600px;white-space:pre">8 (7/16)" x 8 (3/8)"</span>
<span class="abs" style="left:931px;top:7.600px;white-space:pre">Stitches:12357</span>
<span class="abs" style="left:1026.500px;top:7.600px;white-space:pre">Ndls/Cols: 6/19</span>
</div>
</div>
</body></html>
